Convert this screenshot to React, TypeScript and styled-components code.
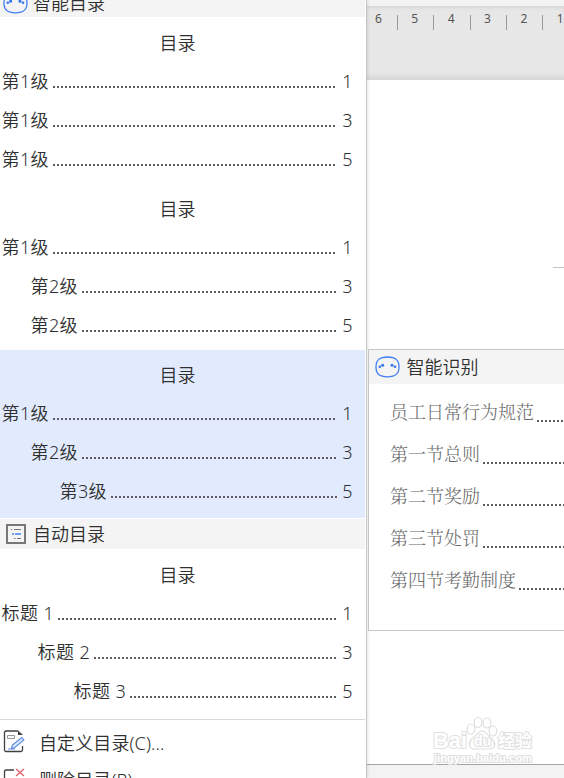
import React from "react";
import styled, { createGlobalStyle } from "styled-components";

const GlobalStyle = createGlobalStyle`
  * { box-sizing: border-box; }
  html, body { margin: 0; padding: 0; overflow: hidden; }
  body { background: #fff; font-family: "Noto Sans", "Noto Sans CJK SC", sans-serif; color: #303030; }
`;

const Screen = styled.div`
  width: 564px;
  height: 778px;
  display: flex;
  overflow: hidden;
  position: relative;
`;

const Menu = styled.aside`
  width: 367px;
  height: 778px;
  flex: none;
  padding-right: 1px;
  background: #fff;
  border-right: 1px solid #c6c6c6;
  box-shadow: 0 0 4px rgba(0, 0, 0, 0.16);
  position: relative;
  overflow: hidden;
  font-size: 18px;
  font-weight: 350;
`;

const SectionHeader = styled.header<{ $first?: boolean }>`
  height: 30px;
  margin-top: ${(p) => (p.$first ? "-13px" : "1px")};
  margin-bottom: 1px;
  padding-top: ${(p) => (p.$first ? "2px" : "0")};
  display: flex;
  align-items: center;
  background: #f4f4f4;
  line-height: 30px;
  white-space: nowrap;
`;

const IconSlot = styled.span`
  width: 33px;
  flex: none;
  display: flex;
  padding-left: 3px;
`;

const TocBlock = styled.section<{ $selected?: boolean }>`
  height: ${(p) => (p.$selected ? "168px" : "166px")};
  padding-top: 11px;
  background: ${(p) => (p.$selected ? "#e2ebfe" : "transparent")};
`;

const TocTitle = styled.div`
  height: 33px;
  padding-right: 10px;
  line-height: 28px;
  text-align: center;
`;

const TocRow = styled.div<{ $indent: number }>`
  height: 39px;
  padding: 0 12px 0 ${(p) => p.$indent + 1.5}px;
  display: flex;
  align-items: center;
  line-height: 39px;
  letter-spacing: 0.4px;
  white-space: nowrap;
`;

const Leader = styled.span<{ $left: number; $drop: number; $right?: number }>`
  flex: 1;
  height: 2px;
  margin: ${(p) => p.$drop}px ${(p) => p.$right ?? 0}px 0 ${(p) => p.$left}px;
  background: repeating-linear-gradient(90deg, #605b60 0 2px, transparent 2px 4px);
`;

const Actions = styled.nav`
  border-top: 1px solid #d9d9d9;
  margin-top: 3px;
  padding-top: 5px;
`;

const Action = styled.div`
  height: 37px;
  display: flex;
  align-items: center;
  line-height: 37px;
  letter-spacing: 0.1px;
  white-space: nowrap;
`;

const ActionIcon = styled.span`
  width: 39px;
  padding: 0 0 4px 3px;
  display: flex;
`;

const Workspace = styled.main`
  flex: 1;
  min-width: 0;
  display: flex;
  flex-direction: column;
`;

const TopStrip = styled.div`
  height: 6px;
  background: #f3f3f3;
`;

const Ruler = styled.div`
  height: 74px;
  padding: 6px 0 0 8px;
  display: flex;
  align-items: flex-start;
  overflow: hidden;
  background: linear-gradient(#d5d5d5 0, #e1e1e1 2px, #e7e7e7 5px, #e7e7e7 66px, #e0e0e0 70px, #d6d6d6 74px);
`;

const Mark = styled.span`
  width: 36.35px;
  height: 18px;
  flex: none;
  display: flex;
  font-size: 12px;
  line-height: 14px;
  color: #555;
`;

const Tick = styled.i`
  width: 1px;
  height: 15px;
  margin: 3px 0 0 15px;
  background: #999;
`;

const Page = styled.div`
  height: 684px;
  padding-top: 187px;
  background: #fff;
`;

const PageRule = styled.div`
  width: 11px;
  height: 1px;
  margin-left: auto;
  background: #c5c5c5;
`;

const StatusBar = styled.footer`
  height: 14px;
  border-top: 1px solid #a3a3a3;
  background: #f3f3f3;
`;

const Preview = styled.section`
  position: absolute;
  left: 368px;
  top: 349px;
  width: 210px;
  height: 282px;
  background: #fff;
  border: 1px solid #c6c6c6;
`;

const PreviewHeader = styled.header`
  height: 34px;
  margin-bottom: 6px;
  padding-left: 6px;
  display: flex;
  align-items: center;
  gap: 6.5px;
  background: #f4f4f4;
  font-size: 18px;
  font-weight: 350;
  line-height: 36px;
`;

const PreviewRow = styled.div`
  height: 42px;
  padding-left: 21px;
  display: flex;
  align-items: center;
  font-family: "Noto Serif CJK SC", "Noto Sans CJK SC", serif;
  font-size: 18px;
  font-weight: 300;
  line-height: 42px;
  color: #686868;
  white-space: nowrap;
`;

const Watermark = styled.div`
  position: absolute;
  left: 432px;
  top: 715px;
  width: 104px;
  height: 52px;
`;

const Stamp = styled.svg`
  display: block;
  overflow: visible;
  text {
    font-family: "Liberation Sans", "Noto Sans CJK SC", sans-serif;
    font-weight: bold;
    fill: #fff;
    stroke: #e0e0e0;
    stroke-width: 2px;
    stroke-linejoin: round;
    paint-order: stroke;
  }
`;

const FaceIcon = () => (
  <svg width="25" height="22" viewBox="0 0 25 22" fill="none">
    <path d="M12.500 1C4.500 1 1 4 1 11s3.500 9.800 11.500 9.800S24 18 24 11 20.500 1 12.500 1Z" stroke="#3f7df4" strokeWidth="1.300" />
    <g fill="#3474ed">
      <circle cx="4.800" cy="10.700" r="1.300" />
      <circle cx="7.600" cy="9.300" r="1.500" />
      <circle cx="17" cy="9.300" r="1.500" />
      <circle cx="20" cy="10.700" r="1.300" />
    </g>
  </svg>
);

const ListIcon = () => (
  <svg width="26" height="20" viewBox="0 0 26 20" fill="none">
    <path d="M4 1h18v18H4z" stroke="#777" strokeWidth="2" />
    <path d="M8 5.500h1M11 5.500h7M11 14.500h1.500M14 14.500h4" stroke="#777" />
    <path d="M9 10h2M12 10h6" stroke="#6f9df0" strokeWidth="2" />
  </svg>
);

const EditIcon = () => (
  <svg width="23" height="23" viewBox="0 0 23 23" fill="none">
    <path d="M15 1H3Q1.500 1 1.500 2.500V20Q1.500 21.500 3 21.500H18Q19.500 21.500 19.500 20V16" stroke="#404040" strokeWidth="1.300" />
    <path d="M15 .500v4.500h5Z" fill="#404040" />
    <path d="M4.500 5.500h7v3h-7Z" stroke="#999" />
    <path d="M9.500 15 18.800 7.500l2 2.500-9 7.500-3.500 1ZM5 19h7" stroke="#5f8de0" strokeWidth="1.200" fill="#dce8ff" />
  </svg>
);

const DeleteIcon = () => (
  <svg width="23" height="23" viewBox="0 0 23 23" fill="none">
    <path d="M11 3H3Q1.500 3 1.500 4.500V20Q1.500 21.500 3 21.500H18V13" stroke="#404040" strokeWidth="1.300" />
    <path d="m13 2 8 7M21 2l-8 7" stroke="#d9606a" strokeWidth="1.300" />
  </svg>
);

type Entry = { label: string; page: number; indent: number };

const Toc = ({ entries, selected }: { entries: Entry[]; selected?: boolean }) => (
  <TocBlock $selected={selected}>
    <TocTitle>目录</TocTitle>
    {entries.map((e, i) => (
      <TocRow key={i} $indent={e.indent}>
        {e.label}
        <Leader $left={4} $drop={11} $right={5} />
        {e.page}
      </TocRow>
    ))}
  </TocBlock>
);

const level = (n: number, page: number): Entry => ({ label: `第${n}级`, page, indent: (n - 1) * 29 });
const heading = (n: number, page: number): Entry => ({ label: `标题 ${n}`, page, indent: (n - 1) * 36 });

const previewRows = ["员工日常行为规范", "第一节总则", "第二节奖励", "第三节处罚", "第四节考勤制度"];

export default function App() {
  return (
    <>
      <GlobalStyle />
      <Screen>
        <Menu>
          <SectionHeader $first>
            <IconSlot><FaceIcon /></IconSlot>智能目录
          </SectionHeader>
          <Toc entries={[level(1, 1), level(1, 3), level(1, 5)]} />
          <Toc entries={[level(1, 1), level(2, 3), level(2, 5)]} />
          <Toc selected entries={[level(1, 1), level(2, 3), level(3, 5)]} />
          <SectionHeader>
            <IconSlot><ListIcon /></IconSlot>自动目录
          </SectionHeader>
          <Toc entries={[heading(1, 1), heading(2, 3), heading(3, 5)]} />
          <Actions>
            <Action><ActionIcon><EditIcon /></ActionIcon>自定义目录(C)...</Action>
            <Action><ActionIcon><DeleteIcon /></ActionIcon>删除目录(R)</Action>
          </Actions>
        </Menu>
        <Workspace>
          <TopStrip />
          <Ruler>
            {[6, 5, 4, 3, 2, 1].map((n) => (
              <Mark key={n}>{n}<Tick /></Mark>
            ))}
          </Ruler>
          <Page><PageRule /></Page>
          <StatusBar />
        </Workspace>
        <Preview>
          <PreviewHeader><FaceIcon />智能识别</PreviewHeader>
          {previewRows.map((t) => (
            <PreviewRow key={t}>{t}<Leader $left={3} $drop={20} /></PreviewRow>
          ))}
        </Preview>
        <Watermark>
          <Stamp width="104" height="52" viewBox="0 0 104 52">
            <text x="1" y="33" fontSize="22" textLength="34" lengthAdjust="spacingAndGlyphs">Bai</text>
            <g fill="#fff" stroke="#dfdfdf" strokeWidth="1.200">
              <path d="M50 16c-4 0-6 5-10 8-4 4-4 10 3 10h14c7 0 7-6 3-10-4-3-6-8-10-8Z" />
              <ellipse cx="39" cy="14" rx="3.800" ry="5" />
              <ellipse cx="46" cy="7.500" rx="3.800" ry="5" />
              <ellipse cx="55" cy="8" rx="3.800" ry="5" />
              <ellipse cx="61" cy="16" rx="3.800" ry="5" />
            </g>
            <text x="42" y="31" fontSize="14" textLength="17">du</text>
            <text x="66" y="32" fontSize="17" textLength="34">经验</text>
            <text x="2" y="47" fontSize="11" textLength="98" lengthAdjust="spacingAndGlyphs">jingyan.baidu.com</text>
          </Stamp>
        </Watermark>
      </Screen>
    </>
  );
}
